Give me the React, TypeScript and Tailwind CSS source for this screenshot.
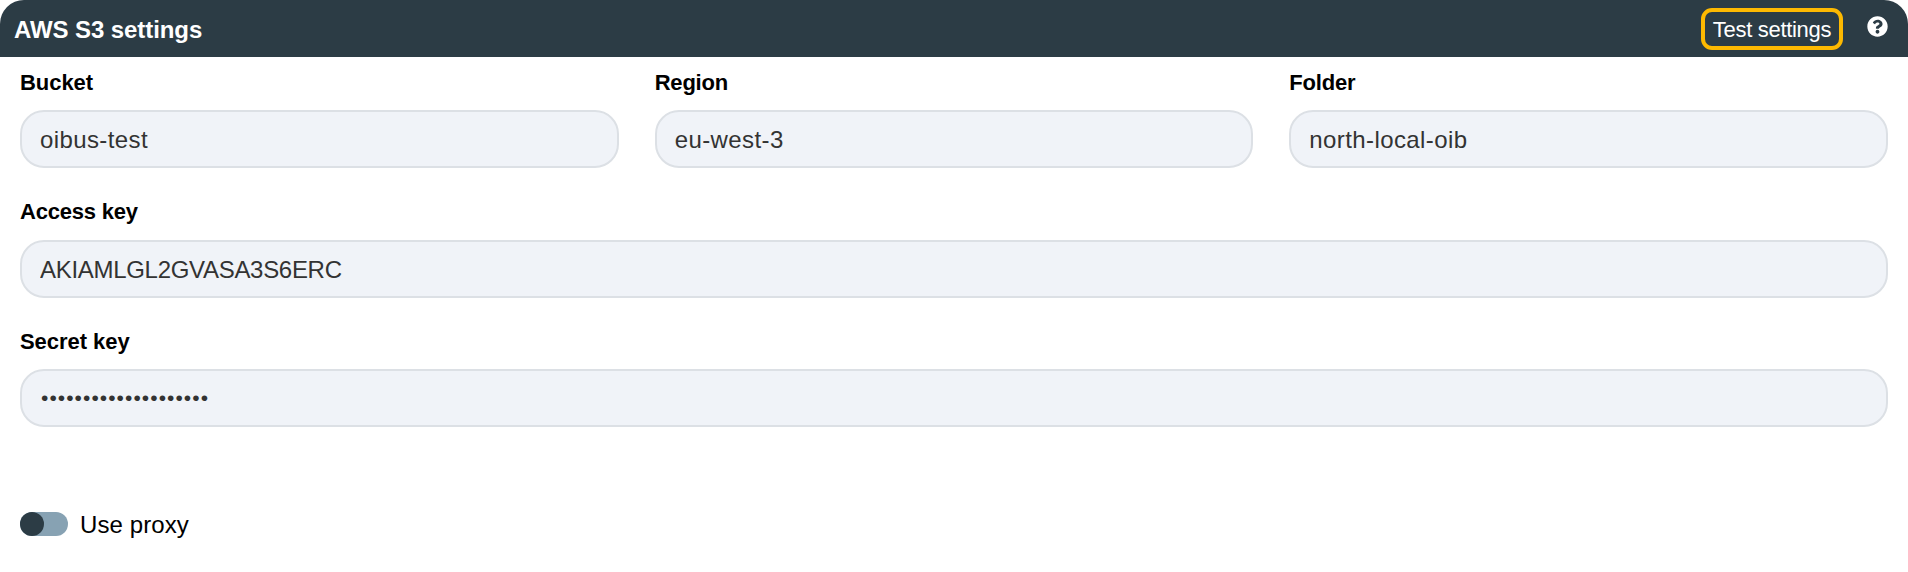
import { FaQuestionCircle } from 'react-icons/fa';

type FieldProps = {
  label: string;
  value: string;
  type?: string;
  labelClass?: string;
  valueClass?: string;
};

function Field({
  label,
  value,
  type = 'text',
  labelClass = 'tracking-[-0.2px]',
  valueClass = 'pt-0.5 text-[24px] tracking-[0.4px]',
}: FieldProps) {
  return (
    <label className="flex flex-col gap-3">
      <span className={`text-[22px] leading-[30px] font-bold text-black ${labelClass}`}>{label}</span>
      <input
        type={type}
        defaultValue={value}
        className={`h-[58px] w-full rounded-[24px] border-2 border-[#dce0e5] bg-[#f0f3f8] px-[18px] text-[#333] outline-none ${valueClass}`}
      />
    </label>
  );
}

export default function App() {
  return (
    <main className="h-[572px] w-full overflow-hidden bg-white font-['Liberation_Sans',sans-serif]">
      <header className="flex h-[57px] items-start justify-between rounded-t-[24px] bg-[#2c3c45] pr-5 pl-3.5 text-white">
        <h1 className="pt-[14px] text-[24px] leading-[32px] font-bold tracking-[-0.08px]">AWS S3 settings</h1>
        <div className="flex items-start gap-6">
          <button className="mt-2 flex h-[42px] w-[142px] items-center justify-center rounded-[11px] border-4 border-[#fdb901] pt-px text-[22px] tracking-[-0.3px] whitespace-nowrap">
            Test settings
          </button>
          <FaQuestionCircle className="mt-4 size-[21px]" />
        </div>
      </header>
      <section className="flex flex-col gap-[29.5px] px-5 pt-[11px]">
        <div className="grid grid-cols-3 gap-9">
          <Field label="Bucket" value="oibus-test" labelClass="tracking-[-0.05px]" />
          <Field label="Region" value="eu-west-3" />
          <Field label="Folder" value="north-local-oib" />
        </div>
        <Field
          label="Access key"
          value="AKIAMLGL2GVASA3S6ERC"
          labelClass="-mt-px mb-px tracking-[-0.2px]"
          valueClass="pt-0.5 text-[24px] tracking-[-0.3px]"
        />
        <Field
          label="Secret key"
          value="AKIAMLGL2GVASA3S6ERC"
          type="password"
          labelClass="tracking-[-0.05px]"
          valueClass="pl-[19px] text-[21px] tracking-[1.05px]"
        />
      </section>
      <div className="mt-[85px] flex h-6 items-center gap-3 pl-5">
        <button role="switch" aria-checked="false" className="flex h-6 w-12 rounded-full bg-[#87a2b3]">
          <span className="size-6 rounded-full bg-[#2c3c45]" />
        </button>
        <span className="pt-0.5 text-[24px] leading-[30px] tracking-[0.1px] text-black">Use proxy</span>
      </div>
    </main>
  );
}
